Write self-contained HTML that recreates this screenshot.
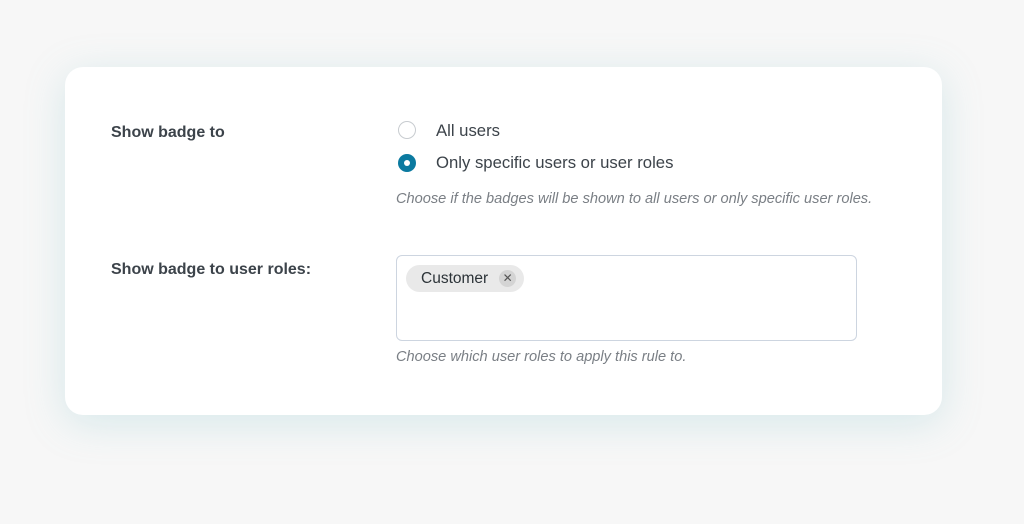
<!DOCTYPE html>
<html><head><meta charset="utf-8"><style>
html,body{margin:0;padding:0}
body{width:1024px;height:524px;background:#f7f7f7;font-family:"Liberation Sans",sans-serif;position:relative;overflow:hidden}
.card{position:absolute;left:65px;top:67px;width:877px;height:348px;background:#fff;border-radius:18px;box-shadow:0 8px 40px rgba(120,190,200,0.25)}
.lbl{position:absolute;left:46px;font-size:16px;font-weight:600;color:#3c434a}
.radio{position:absolute;left:333px;width:18px;height:18px;border-radius:50%;box-sizing:border-box}
.rt{position:absolute;left:371px;font-size:16.7px;color:#3c434a}
.help{position:absolute;left:331px;font-size:14.6px;font-style:italic;color:#7a7f85}
.box{position:absolute;left:331px;top:188px;width:461px;height:86px;border:1px solid #cdd5e0;border-radius:6px;box-sizing:border-box}
.tag{position:absolute;left:9px;top:9px;height:27px;padding:0 36px 0 15px;background:#e9e9e9;border-radius:14px;font-size:15.5px;line-height:27px;color:#2c3338}
.x{position:absolute;right:8px;top:5px;width:17px;height:17px;border-radius:50%;background:#d4d4d4;font-size:12px;line-height:17px;text-align:center;color:#555}
</style></head><body>
<div class="card">
<div class="lbl" style="top:57px">Show badge to</div>
<div class="radio" style="top:54px;border:1px solid #c8ccd0"></div>
<div class="rt" style="top:54px">All users</div>
<div class="radio" style="top:87px;background:#0b7aa0;"><div style="position:absolute;left:6px;top:6px;width:6px;height:6px;border-radius:50%;background:#fff"></div></div>
<div class="rt" style="top:86px">Only specific users or user roles</div>
<div class="help" style="top:124px">Choose if the badges will be shown to all users or only specific user roles.</div>
<div class="lbl" style="top:194px">Show badge to user roles:</div>
<div class="box"><div class="tag">Customer<div class="x">✕</div></div></div>
<div class="help" style="top:282px">Choose which user roles to apply this rule to.</div>
</div>
</body></html>
